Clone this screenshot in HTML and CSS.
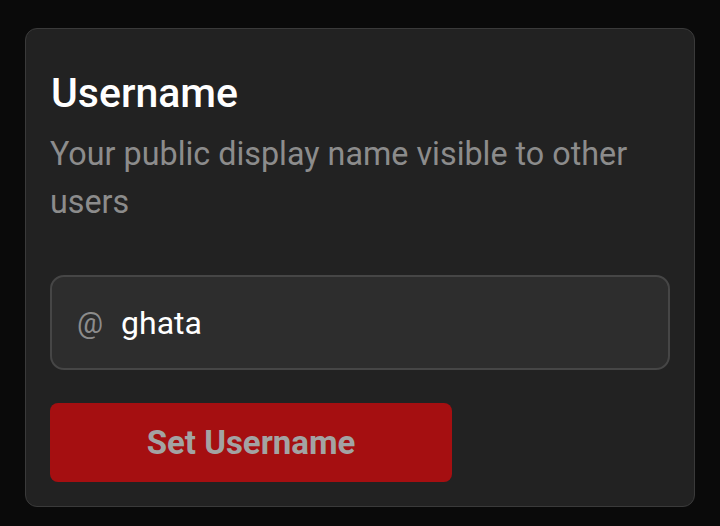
FILE: index.html
```html
<!DOCTYPE html>
<html lang="en">
<head>
    <meta charset="UTF-8">
    <meta name="viewport" content="width=device-width, initial-scale=1.0">
    <title>Username</title>
    <link rel="stylesheet" href="styles.css">
</head>
<body>
    <div class="card">
        <h1>Username</h1>
        <p class="hint">Your public display name visible to other users</p>

        <form class="username-form">
            <label class="field">
                <span class="prefix">@</span>
                <input type="text" id="username" name="username" value="ghata">
            </label>
            <button type="button" class="submit">Set Username</button>
        </form>
    </div>
</body>
</html>
```

FILE: styles.css
```css
body {
    font-family: Roboto, "Noto Sans", sans-serif;
    background-color: #0a0a0a;
    margin: 0;
    padding: 28px 25px 18px 25px;
}
.card {
    background: #222222;
    border: 1px solid #3a3a3a;
    border-radius: 12px;
    padding: 40px 24px 24px 24px;
}
.card h1 {
    color: #fff;
    font-size: 41px;
    font-weight: 500;
    line-height: 48px;
    margin: 0 0 0 1px;
}
.hint {
    color: #8c8c8c;
    font-size: 32.3px;
    line-height: 48px;
    margin: 13px 0 0 0;
}
.username-form {
    margin-top: 49px;
    display: flex;
    flex-direction: column;
    align-items: flex-start;
    gap: 33px;
}
.field {
    box-sizing: border-box;
    width: 100%;
    height: 95px;
    display: flex;
    align-items: center;
    gap: 18px;
    padding: 0 25px;
    background: #2d2d2d;
    border: 2px solid #464646;
    border-radius: 14px;
}
.prefix {
    color: #8c8c8c;
    font-size: 29px;
}
.field input {
    flex: 1;
    background: transparent;
    border: none;
    outline: none;
    padding: 0;
    color: #fff;
    font-family: inherit;
    font-size: 32px;
}
.submit {
    width: 402px;
    height: 79px;
    background-color: #a50f11;
    color: #a3a3a3;
    border: none;
    border-radius: 8px;
    font-family: inherit;
    font-size: 33px;
    font-weight: 700;
}
```
